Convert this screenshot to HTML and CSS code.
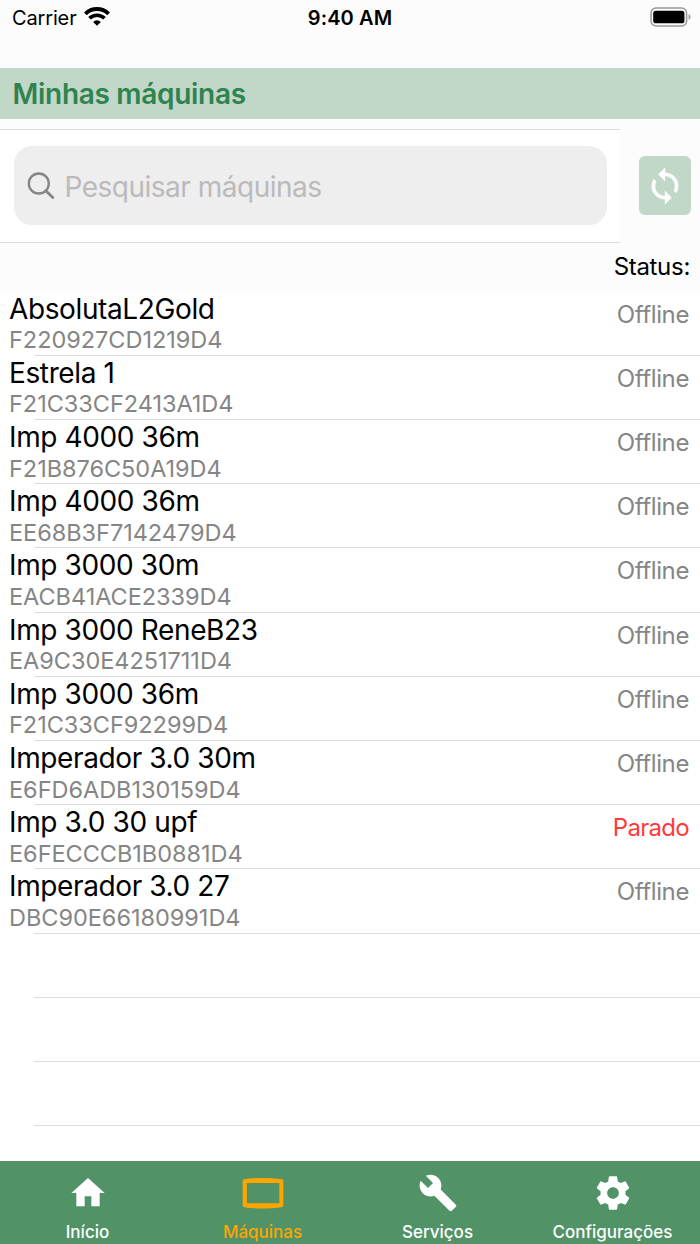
FILE: index.html
```html
<!DOCTYPE html>
<html lang="pt-BR">
<head>
    <meta charset="UTF-8">
    <meta name="viewport" content="width=device-width, initial-scale=1.0">
    <title>Minhas máquinas</title>
    <link rel="stylesheet" href="styles.css">
</head>
<body>
    <div class="status-bar">
        <div class="carrier">
            <span>Carrier</span>
            <svg class="wifi" viewBox="0 0 26 19">
                <path d="M1.4 6.8a16.6 16.6 0 0 1 23.2 0" fill="none" stroke="#000" stroke-width="3.9"/>
                <path d="M5.5 11.3a10.6 10.6 0 0 1 15 0" fill="none" stroke="#000" stroke-width="3.6"/>
                <path d="M13 18.7l-3.9-3.8a5.5 5.5 0 0 1 7.8 0z"/>
            </svg>
        </div>
        <span class="clock">9:40 AM</span>
        <svg class="battery" viewBox="0 0 42 20">
            <rect x="1" y="1" width="35.6" height="18" rx="5" fill="none" stroke="#999" stroke-width="1.5"/>
            <rect x="3.2" y="3.7" width="31.2" height="12.6" rx="2.6"/>
            <path d="M38.6 7v6q2-.8 2-3t-2-3z" fill="#999"/>
        </svg>
    </div>
    <h1>Minhas máquinas</h1>
    <div class="toolbar">
        <div class="search">
            <label class="search-box">
                <svg class="search-icon" viewBox="0 0 28 28">
                    <circle cx="11.8" cy="11.5" r="10" fill="none" stroke="#85858a" stroke-width="2.3"/>
                    <path d="M19 19l6.8 6.5" stroke="#85858a" stroke-width="2.9" stroke-linecap="round"/>
                </svg>
                <input type="text" placeholder="Pesquisar máquinas">
            </label>
        </div>
        <button class="sync-btn" aria-label="Atualizar">
            <svg viewBox="0 0 24 24"><path d="M12 4V1L8 5l4 4V6c3.31 0 6 2.69 6 6 0 1.01-.25 1.97-.7 2.8l1.46 1.46A7.93 7.93 0 0 0 20 12c0-4.42-3.58-8-8-8zm0 14c-3.31 0-6-2.69-6-6 0-1.01.25-1.97.7-2.8L5.24 7.74A7.93 7.93 0 0 0 4 12c0 4.42 3.58 8 8 8v3l4-4-4-4v3z"/></svg>
        </button>
    </div>
    <div class="list-header">Status:</div>
    <ul class="machines">
        <li><div><p class="name">AbsolutaL2Gold</p><p class="serial">F220927CD1219D4</p></div><span class="state">Offline</span></li>
        <li><div><p class="name">Estrela 1</p><p class="serial">F21C33CF2413A1D4</p></div><span class="state">Offline</span></li>
        <li><div><p class="name">Imp 4000 36m</p><p class="serial">F21B876C50A19D4</p></div><span class="state">Offline</span></li>
        <li><div><p class="name">Imp 4000 36m</p><p class="serial">EE68B3F7142479D4</p></div><span class="state">Offline</span></li>
        <li><div><p class="name">Imp 3000 30m</p><p class="serial">EACB41ACE2339D4</p></div><span class="state">Offline</span></li>
        <li><div><p class="name">Imp 3000 ReneB23</p><p class="serial">EA9C30E4251711D4</p></div><span class="state">Offline</span></li>
        <li><div><p class="name">Imp 3000 36m</p><p class="serial">F21C33CF92299D4</p></div><span class="state">Offline</span></li>
        <li><div><p class="name">Imperador 3.0 30m</p><p class="serial">E6FD6ADB130159D4</p></div><span class="state">Offline</span></li>
        <li><div><p class="name">Imp 3.0 30 upf</p><p class="serial">E6FECCCB1B0881D4</p></div><span class="state stopped">Parado</span></li>
        <li><div><p class="name">Imperador 3.0 27</p><p class="serial">DBC90E66180991D4</p></div><span class="state">Offline</span></li>
        <li></li>
        <li></li>
        <li></li>
    </ul>
    <nav class="tabs">
        <a class="tab">
            <svg viewBox="0 0 24 24"><path d="M10 20v-6h4v6h5v-8h3L12 3 2 12h3v8z"/></svg>
            <span>Início</span>
        </a>
        <a class="tab active">
            <svg viewBox="0 0 24 24"><path fill-rule="evenodd" d="M.7 3.7Q12 2.2 23.3 3.7q.9.2.9 1.1v14.6q0 .9-.9 1.1-11.3 1.6-22.6 0-.9-.2-.9-1.1V4.8q0-.9.9-1.1zM2.3 6v12.1h19.5V6z"/></svg>
            <span>Máquinas</span>
        </a>
        <a class="tab">
            <svg viewBox="0 0 24 24"><path d="M22.7 19l-9.1-9.1c.9-2.3.4-5-1.5-6.9-2-2-5-2.4-7.4-1.3L9 6 6 9 1.6 4.7C.4 7.1.9 10.1 2.9 12.1c1.9 1.9 4.6 2.4 6.9 1.5l9.1 9.1c.4.4 1 .4 1.4 0l2.3-2.3c.5-.4.5-1.1.1-1.4z"/></svg>
            <span>Serviços</span>
        </a>
        <a class="tab">
            <svg viewBox="0 0 24 24"><path d="M19.43 12.98c.04-.32.07-.64.07-.98s-.03-.66-.07-.98l2.11-1.65c.19-.15.24-.42.12-.64l-2-3.46c-.12-.22-.39-.3-.61-.22l-2.49 1c-.52-.4-1.08-.73-1.69-.98l-.38-2.65C14.46 2.18 14.25 2 14 2h-4c-.25 0-.46.18-.49.42l-.38 2.65c-.61.25-1.17.59-1.69.98l-2.49-1c-.23-.09-.49 0-.61.22l-2 3.46c-.13.22-.07.49.12.64l2.11 1.65c-.04.32-.07.65-.07.98s.03.66.07.98l-2.11 1.65c-.19.15-.24.42-.12.64l2 3.46c.12.22.39.3.61.22l2.49-1c.52.4 1.08.73 1.69.98l.38 2.65c.03.24.24.42.49.42h4c.25 0 .46-.18.49-.42l.38-2.65c.61-.25 1.17-.59 1.69-.98l2.49 1c.23.09.49 0 .61-.22l2-3.46c.12-.22.07-.49-.12-.64l-2.11-1.65zM12 15.5c-1.93 0-3.5-1.57-3.5-3.5s1.57-3.5 3.5-3.5 3.5 1.57 3.5 3.5-1.57 3.5-3.5 3.5z"/></svg>
            <span>Configurações</span>
        </a>
    </nav>
</body>
</html>
```
FILE: styles.css
```css
/* General Styles */
* {
    box-sizing: border-box;
}

body {
    font-family: Inter, "Liberation Sans", sans-serif;
    display: flex;
    flex-direction: column;
    height: 1244px;
    margin: 0;
    background: #fcfcfc;
    color: #000;
    overflow: hidden;
}

/* Status bar */
.status-bar {
    display: grid;
    grid-template-columns: 1fr auto 1fr;
    align-items: center;
    height: 68px;
    padding: 0 9px 32px 12px;
    font-size: 20px;
}

.carrier {
    display: flex;
    align-items: center;
    gap: 7px;
    letter-spacing: -0.15px;
}

.wifi {
    width: 26px;
    height: 19px;
    margin-top: -3px;
}

.clock {
    margin-right: 3px;
    font-weight: 600;
    letter-spacing: 0.1px;
}

.battery {
    width: 42px;
    height: 20px;
    justify-self: end;
    margin: -2px -0.5px 0 0;
}

h1 {
    height: 51px;
    margin: 0;
    padding-left: 12.5px;
    background: #c1d7c7;
    color: #2f8350;
    font-size: 28px;
    font-weight: 600;
    letter-spacing: -0.3px;
    line-height: 52px;
}

/* Search */
.toolbar {
    display: flex;
    margin-top: 10px;
    height: 114px;
}

.search {
    width: 620px;
    padding: 16px 13px 16px 14px;
    background: #fff;
    border-top: 1px solid #dcdcdc;
    border-bottom: 1px solid #dcdcdc;
}

.search-box {
    display: flex;
    align-items: center;
    gap: 10px;
    height: 79px;
    padding-left: 12.5px;
    border-radius: 18px;
    background: #eee;
}

.search-icon {
    width: 28px;
    height: 28px;
}

.search input {
    flex: 1;
    padding: 2px 0 0;
    border: none;
    background: none;
    font-family: inherit;
    font-size: 28px;
    letter-spacing: -0.5px;
}

.search input::placeholder {
    color: #bababc;
}

.sync-btn {
    width: 52px;
    height: 59px;
    margin: 27px 0 0 19.3px;
    padding: 0;
    border: none;
    border-radius: 6px;
    background: #c1d7c7;
}

.sync-btn svg {
    display: block;
    width: 40px;
    height: 40px;
    margin: auto;
    fill: #fff;
    stroke: #fff;
    stroke-width: 0.2px;
}

/* Machine list */
.list-header {
    height: 48.7px;
    padding-right: 10px;
    font-size: 24px;
    letter-spacing: -0.3px;
    line-height: 48px;
    text-align: right;
}

.machines {
    flex: 1;
    list-style: none;
    margin: 0;
    padding: 0;
    background: #fff;
}

.machines li {
    display: flex;
    justify-content: space-between;
    height: 64.2px;
    padding: 0 11px 0 9px;
    background: linear-gradient(#dcdcdc, #dcdcdc) 34px 100% / 100% 1px no-repeat;
}

.name {
    margin: 0;
    font-size: 28px;
    letter-spacing: -0.38px;
    line-height: 35.5px;
}

.serial {
    margin: 0;
    color: #858585;
    font-size: 23.5px;
    letter-spacing: -0.03px;
    line-height: 26px;
}

.state {
    color: #858585;
    font-size: 24px;
    letter-spacing: -0.4px;
    line-height: 46px;
}

.stopped {
    color: #ff3a3a;
    letter-spacing: -0.7px;
}

/* Tab bar */
.tabs {
    display: flex;
    height: 83px;
    background: #519267;
}

.tab {
    flex: 1;
    display: flex;
    flex-direction: column;
    align-items: center;
    padding-top: 12px;
    color: #fff;
    font-size: 17px;
    font-weight: 500;
    line-height: 20px;
}

.tab svg {
    width: 40px;
    height: 40px;
    margin-bottom: 8.5px;
    fill: currentColor;
    overflow: visible;
}

.tab.active {
    color: #ffa500;
}
```
